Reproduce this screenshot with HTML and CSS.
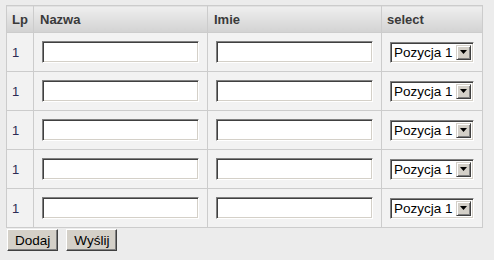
FILE: index.html
```html
<!DOCTYPE html>
<html>
<head>
<meta charset="utf-8">
<link rel="stylesheet" href="styles.css">
</head>
<body>
<table class="grid">
  <colgroup>
    <col class="c-lp"><col class="c-name"><col class="c-name"><col class="c-sel">
  </colgroup>
  <thead>
    <tr><th>Lp</th><th>Nazwa</th><th>Imie</th><th>select</th></tr>
  </thead>
  <tbody>
    <tr><td class="lp">1</td><td><input class="field" type="text"></td><td><input class="field" type="text"></td><td><span class="combo"><span class="combo-text">Pozycja 1</span><span class="combo-btn"><svg width="7" height="4" viewBox="0 0 7 4"><path d="M0 0h7L3.5 4z" fill="#000"/></svg></span></span></td></tr>
    <tr><td class="lp">1</td><td><input class="field" type="text"></td><td><input class="field" type="text"></td><td><span class="combo"><span class="combo-text">Pozycja 1</span><span class="combo-btn"><svg width="7" height="4" viewBox="0 0 7 4"><path d="M0 0h7L3.5 4z" fill="#000"/></svg></span></span></td></tr>
    <tr><td class="lp">1</td><td><input class="field" type="text"></td><td><input class="field" type="text"></td><td><span class="combo"><span class="combo-text">Pozycja 1</span><span class="combo-btn"><svg width="7" height="4" viewBox="0 0 7 4"><path d="M0 0h7L3.5 4z" fill="#000"/></svg></span></span></td></tr>
    <tr><td class="lp">1</td><td><input class="field" type="text"></td><td><input class="field" type="text"></td><td><span class="combo"><span class="combo-text">Pozycja 1</span><span class="combo-btn"><svg width="7" height="4" viewBox="0 0 7 4"><path d="M0 0h7L3.5 4z" fill="#000"/></svg></span></span></td></tr>
    <tr><td class="lp">1</td><td><input class="field" type="text"></td><td><input class="field" type="text"></td><td><span class="combo"><span class="combo-text">Pozycja 1</span><span class="combo-btn"><svg width="7" height="4" viewBox="0 0 7 4"><path d="M0 0h7L3.5 4z" fill="#000"/></svg></span></span></td></tr>
  </tbody>
</table>
<div class="actions">
  <button class="btn" type="button">Dodaj</button>
  <button class="btn" type="button">Wyślij</button>
</div>
</body>
</html>
```
FILE: styles.css
```css
html, body {
  background: #ececec;
}
body {
  margin: 5px 6px;
  font-family: "Liberation Sans", Arial, sans-serif;
  font-size: 13px;
  color: #333;
}
.grid {
  border-collapse: collapse;
  table-layout: fixed;
  width: 476px;
}
.c-lp { width: 27px; }
.c-name { width: 174px; }
.c-sel { width: 101px; }
.grid th, .grid td {
  border: 1px solid #cccccc;
  text-align: left;
}
.grid th {
  height: 26px;
  padding: 0 5px;
  font-weight: bold;
  color: #3a3a3a;
  background: linear-gradient(#efefef, #d2d2d2);
  line-height: 15px;
}
.grid th:nth-child(2), .grid th:nth-child(3) { padding-left: 6px; }
.grid td {
  height: 38px;
  padding: 0 8px;
  background: #f2f2f2;
  vertical-align: middle;
}
.grid td.lp {
  padding: 0 5px;
  color: #2b2b55;
}
.field {
  display: block;
  box-sizing: border-box;
  width: 157px;
  height: 22px;
  margin: 0;
  padding: 0 2px;
  background: #fff;
  border: 1px solid;
  border-color: #808080 #ffffff #ffffff #808080;
  box-shadow: inset 1px 1px 0 #404040, inset -1px -1px 0 #d4d0c8;
  font: 13px "Liberation Sans", Arial, sans-serif;
  outline: none;
}
.combo {
  display: flex;
  box-sizing: border-box;
  width: 84px;
  height: 21px;
  background: #fff;
  border: 1px solid;
  border-color: #808080 #ffffff #ffffff #808080;
  box-shadow: inset 1px 1px 0 #404040, inset -1px -1px 0 #d4d0c8;
  padding: 2px;
  align-items: stretch;
}
.combo-text {
  flex: 1;
  font-size: 13.5px;
  line-height: 15px;
  color: #000;
  padding-left: 1px;
  white-space: nowrap;
  overflow: hidden;
}
.combo-btn {
  width: 15px;
  box-sizing: border-box;
  background: #d4d0c8;
  border: 1px solid;
  border-color: #d4d0c8 #404040 #404040 #d4d0c8;
  box-shadow: inset 1px 1px 0 #ffffff, inset -1px -1px 0 #808080;
  display: flex;
  align-items: center;
  justify-content: center;
}
.actions {
  display: flex;
  gap: 8px;
  margin-top: 1px;
  padding-left: 1px;
}
.btn {
  box-sizing: border-box;
  height: 22px;
  margin: 0;
  padding: 0 7px;
  background: #d4d0c8;
  border: 1px solid;
  border-color: #ffffff #404040 #404040 #ffffff;
  box-shadow: inset -1px -1px 0 #808080;
  font: 13.5px "Liberation Sans", Arial, sans-serif;
  color: #000;
  border-radius: 0;
}
```
